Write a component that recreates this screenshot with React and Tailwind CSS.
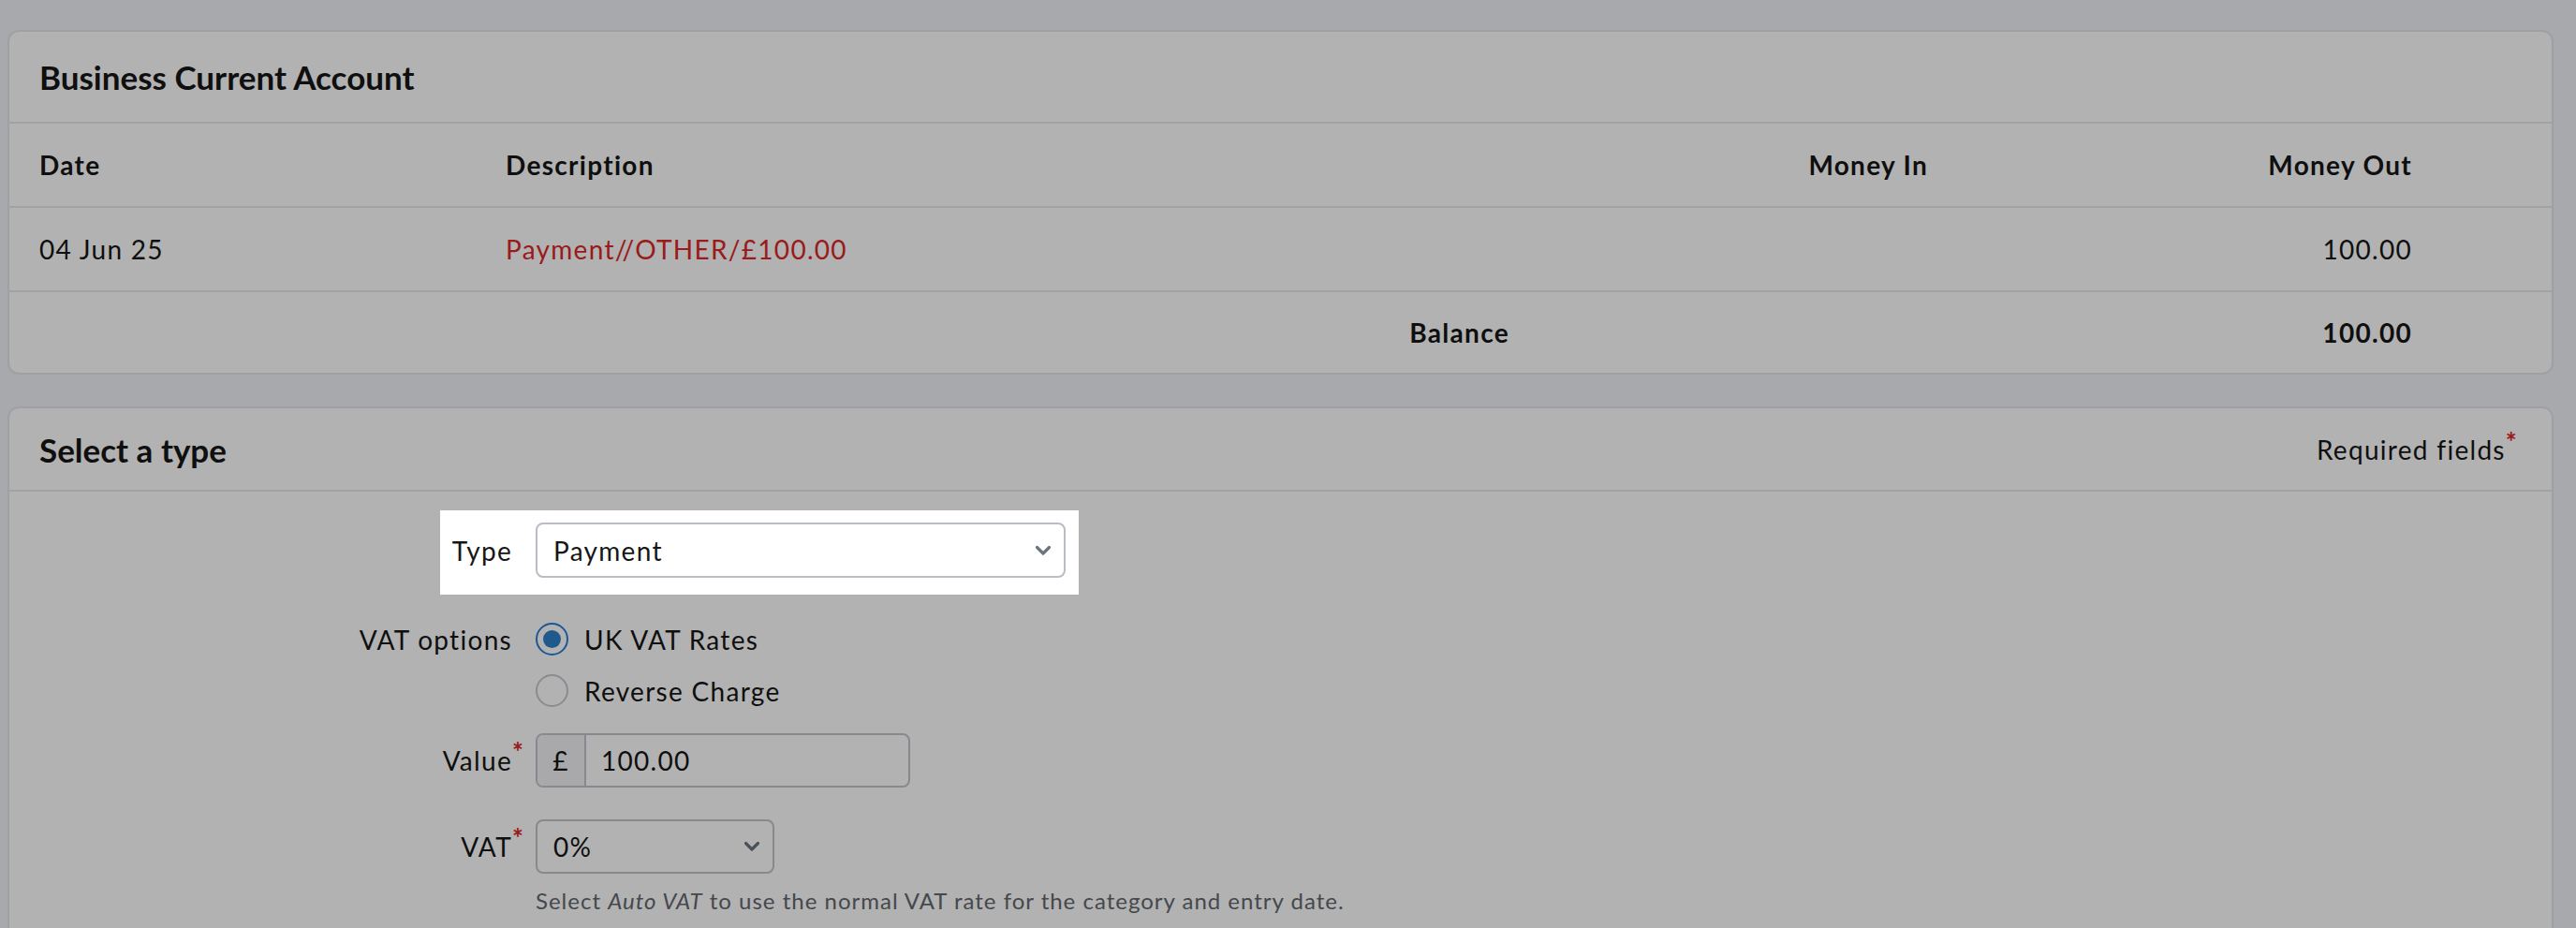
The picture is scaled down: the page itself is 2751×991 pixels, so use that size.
import React from 'react';

const font = { fontFamily: 'Lato, "Noto Sans", sans-serif' };

const Chevron = () => (
  <svg width="18" height="12" viewBox="0 0 18 12" fill="none" className="text-[#6b7580]">
    <path d="M2.5 2.5l6.5 6.5 6.5-6.5" stroke="currentColor" strokeWidth="3.2" strokeLinecap="round" strokeLinejoin="round" />
  </svg>
);

const Req = () => (
  <span className="absolute left-full top-[-10px] text-[28px] font-bold text-[#dc2828]">*</span>
);

const Radio = ({ checked, label }) => (
  <label className="flex h-[55px] items-center gap-[17px]">
    {checked ? (
      <span className="flex h-[35px] w-[35px] items-center justify-center rounded-full border-2 border-[#2b7fd4] bg-white">
        <span className="h-[19px] w-[19px] rounded-full bg-[#2e80c8]" />
      </span>
    ) : (
      <span className="h-[35px] w-[35px] rounded-full border-2 border-[#c4c8ce] bg-white" />
    )}
    <span>{label}</span>
  </label>
);

export default function App() {
  return (
    <div className="min-h-screen bg-[#f0f3f8] pl-[8px] pr-[24px] pt-[32px] text-[28px] leading-[34px] tracking-[1.3px] text-[#161616]" style={font}>
      {/* Account table */}
      <div className="rounded-[12px] border-2 border-[#e3e5ea] bg-white">
        <div className="flex h-[98px] items-center border-b-2 border-[#e6e8ed] pl-[32px] text-[35px] font-bold tracking-normal">
          Business Current Account
        </div>
        <div className="flex h-[90px] items-center border-b-2 border-[#e6e8ed] pr-[149px] font-bold">
          <div className="w-[530px] pl-[32px]">Date</div>
          <div className="flex-1">Description</div>
          <div className="w-[419px] text-right">Money In</div>
          <div className="w-[517px] text-right">Money Out</div>
        </div>
        <div className="flex h-[90px] items-center border-b-2 border-[#e6e8ed] pr-[149px]">
          <div className="w-[530px] pl-[32px]">04 Jun 25</div>
          <div className="flex-1 text-[#dc2828]">Payment//OTHER/£100.00</div>
          <div className="w-[419px] text-right"></div>
          <div className="w-[517px] text-right">100.00</div>
        </div>
        <div className="flex h-[86px] items-center pr-[149px] font-bold">
          <div className="w-[530px]"></div>
          <div className="flex-1 pr-[28px] text-right">Balance</div>
          <div className="w-[419px] text-right"></div>
          <div className="w-[517px] text-right">100.00</div>
        </div>
      </div>

      {/* Select a type */}
      <div className="mt-[34px] rounded-[12px] border-2 border-[#e3e5ea] bg-white">
        <div className="flex h-[89px] items-center justify-between border-b-2 border-[#e6e8ed] pl-[32px] pr-[36px]">
          <span className="text-[35px] font-bold tracking-normal">Select a type</span>
          <span>
            Required fields<span className="relative top-[-9px] font-bold text-[#dc2828]">*</span>
          </span>
        </div>

        <div className="pb-[80px] pt-[33px]">
          {/* Type */}
          <div className="flex items-center gap-[25px]">
            <div className="w-[537px] text-right">Type</div>
            <div className="relative">
              <div className="flex h-[59px] w-[566px] items-center justify-between rounded-[8px] border-2 border-[#b9bdc4] bg-white pl-[17px] pr-[13px]">
                <span>Payment</span>
                <Chevron />
              </div>
              <div className="pointer-events-none absolute bottom-[-18px] left-[-102px] right-[-14px] top-[-13px] z-10 shadow-[0_0_0_4000px_rgba(0,0,0,0.3)]" />
            </div>
          </div>

          {/* VAT options */}
          <div className="mt-[38px] flex gap-[25px]">
            <div className="flex h-[55px] w-[537px] items-center justify-end">VAT options</div>
            <div className="flex flex-col">
              <Radio checked label="UK VAT Rates" />
              <Radio label="Reverse Charge" />
            </div>
          </div>

          {/* Value */}
          <div className="mt-[18px] flex items-center gap-[25px]">
            <div className="flex w-[537px] justify-end">
              <span className="relative">
                Value
                <Req />
              </span>
            </div>
            <div className="flex h-[58px] w-[400px] overflow-hidden rounded-[8px] border-2 border-[#c0c4ca]">
              <div className="flex w-[52px] items-center justify-center border-r-2 border-[#c0c4ca] bg-[#f2f3f5]">£</div>
              <div className="flex flex-1 items-center pl-[16px]">100.00</div>
            </div>
          </div>

          {/* VAT */}
          <div className="mt-[34px] flex items-center gap-[25px]">
            <div className="flex w-[537px] justify-end">
              <span className="relative">
                VAT
                <Req />
              </span>
            </div>
            <div className="flex h-[58px] w-[255px] items-center justify-between rounded-[8px] border-2 border-[#c0c4ca] pl-[17px] pr-[13px]">
              <span>0%</span>
              <Chevron />
            </div>
          </div>

          <div className="ml-[562px] mt-[14px] text-[24px] leading-[30px] tracking-[1px] text-[#63676e]">
            Select <i>Auto VAT</i> to use the normal VAT rate for the category and entry date.
          </div>
        </div>
      </div>
    </div>
  );
}
